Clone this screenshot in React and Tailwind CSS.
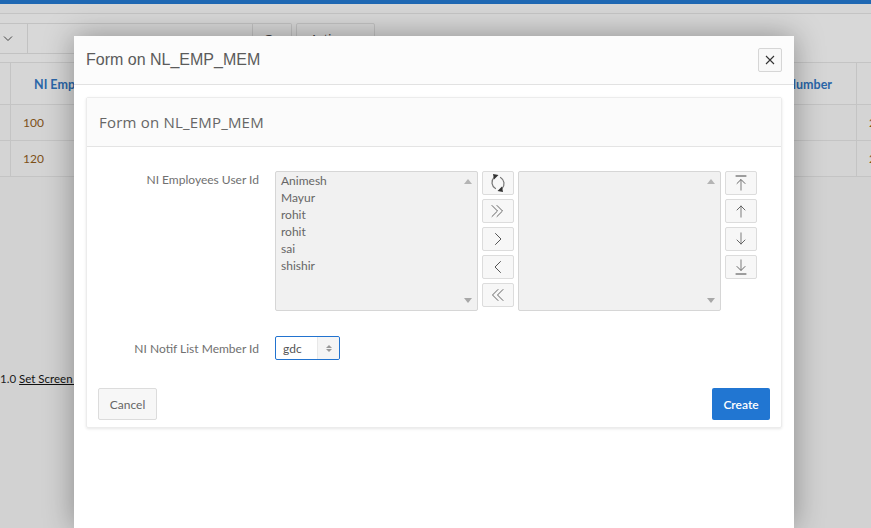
const sans = "font-['Lato',sans-serif]";

function Ico({ children }) {
  return (
    <svg width="22" height="20" viewBox="0 0 22 20" fill="none" stroke="#555" strokeWidth="1" strokeLinecap="round" strokeLinejoin="round">
      {children}
    </svg>
  );
}

function IconBtn({ children }) {
  return (
    <button className="w-[32px] h-[24px] flex items-center justify-center bg-[#f7f7f7] border border-[#dcdcdc] rounded-[2px]">
      {children}
    </button>
  );
}

const icons = {
  refresh: (
    <Ico>
      <path d="M7 4.5 A7 7 0 0 0 8.5 15.5" stroke="#777" strokeWidth="1.2" />
      <path d="M15 15.5 A7 7 0 0 0 13.5 4.5" stroke="#777" strokeWidth="1.2" />
      <path d="M6 1 L11.5 2 L7 6.5 Z" fill="#333" stroke="none" />
      <path d="M16 19 L10.5 18 L15 13.5 Z" fill="#333" stroke="none" />
    </Ico>
  ),
  dblR: (
    <Ico>
      <path d="M5 4.5 L10.5 10 L5 15.5" stroke="#666" />
      <path d="M10 4.5 L15.5 10 L10 15.5" stroke="#666" />
    </Ico>
  ),
  r: (
    <Ico>
      <path d="M8.5 4.5 L14 10 L8.5 15.5" stroke="#555" />
    </Ico>
  ),
  l: (
    <Ico>
      <path d="M13.5 4.5 L8 10 L13.5 15.5" stroke="#555" />
    </Ico>
  ),
  dblL: (
    <Ico>
      <path d="M11 4.5 L5.5 10 L11 15.5" stroke="#666" />
      <path d="M16 4.5 L10.5 10 L16 15.5" stroke="#666" />
    </Ico>
  ),
  top: (
    <Ico>
      <path d="M6 3 H16" stroke="#444" />
      <path d="M11 7 V17" stroke="#999" strokeWidth="1.3" />
      <path d="M7 10.5 L11 6.5 L15 10.5" stroke="#666" />
    </Ico>
  ),
  up: (
    <Ico>
      <path d="M11 5 V16" stroke="#999" strokeWidth="1.3" />
      <path d="M7 9 L11 5 L15 9" stroke="#666" />
    </Ico>
  ),
  down: (
    <Ico>
      <path d="M11 4 V15" stroke="#999" strokeWidth="1.3" />
      <path d="M7 11 L11 15 L15 11" stroke="#666" />
    </Ico>
  ),
  bottom: (
    <Ico>
      <path d="M6 17 H16" stroke="#444" />
      <path d="M11 3 V13" stroke="#999" strokeWidth="1.3" />
      <path d="M7 9.5 L11 13.5 L15 9.5" stroke="#666" />
    </Ico>
  ),
};

function ListBox({ items = [] }) {
  return (
    <div className="relative shrink-0 w-[203px] h-[140px] bg-[#f1f1f1] border border-[#d6d6d6] rounded-[2px] pl-[5px] text-[12px] leading-[17px] text-[#666]">
      {items.map((t, i) => (
        <div key={i}>{t}</div>
      ))}
      <span className="absolute right-[5px] top-[7px] w-0 h-0 border-x-[4px] border-x-transparent border-b-[5px] border-b-[#b4b4b4]" />
      <span className="absolute right-[5px] bottom-[7px] w-0 h-0 border-x-[4px] border-x-transparent border-t-[5px] border-t-[#a8a8a8]" />
    </div>
  );
}

function Background() {
  return (
    <div className={`h-full bg-[#d2d2d2] text-[12px] ${sans}`}>
      <div className="h-[4px] bg-[#1f68b3]" />
      <div className="h-[10px] bg-[#d6d6d6] border-b border-[#c4c4c4]" />
      <div className="h-[48px] bg-[#d8d8d8] flex pt-[9px]">
        <div className="w-[28px] h-[31px] border-y border-r border-[#c2c2c2] flex items-center pl-[3px]">
          <svg width="10" height="6" viewBox="0 0 10 6" fill="none" stroke="#444"><path d="M1 .5 L5 4.5 L9 .5" /></svg>
        </div>
        <div className="w-[225px] h-[31px] border-y border-r border-[#c2c2c2]" />
        <div className="w-[39px] h-[31px] border-y border-r border-[#c2c2c2] rounded-r-[2px] text-[#444] pl-[11px] pt-[6px]">Go</div>
        <div className="ml-[4px] w-[79px] h-[31px] border border-[#c2c2c2] rounded-[2px] text-[#444] pl-[13px] pt-[6px]">Actions</div>
      </div>
      <div className="border-b border-[#c4c4c4]">
        <div className="h-[43px] flex border-y border-[#c4c4c4] bg-[#d6d6d6] font-bold text-[12.5px] text-[#2a66a8]">
          <div className="w-[11px] border-r border-[#c4c4c4]" />
          <div className="flex-1 pl-[23px] leading-[43px]">NI Employees User Id</div>
          <div className="w-[60px] text-right leading-[43px] mr-[24px]">Number</div>
          <div className="w-[15px] border-l border-[#c4c4c4]" />
        </div>
        <div className="h-[36px] flex text-[#7d5018] bg-[#d4d4d4] border-b border-[#c4c4c4]">
          <div className="w-[11px] border-r border-[#c4c4c4]" />
          <div className="flex-1 pl-[12px] leading-[35px]">100</div>
          <div className="w-[15px] border-l border-[#c4c4c4] pl-[12px] leading-[35px]">2</div>
        </div>
        <div className="h-[35px] flex text-[#7d5018] bg-[#d4d4d4]">
          <div className="w-[11px] border-r border-[#c4c4c4]" />
          <div className="flex-1 pl-[12px] leading-[35px]">120</div>
          <div className="w-[15px] border-l border-[#c4c4c4] pl-[12px] leading-[35px]">2</div>
        </div>
      </div>
      <div className="mt-[194px] text-[11.5px] text-[#222] leading-[16px] whitespace-nowrap flex gap-[3px]">
        <span>1.0</span>
        <span className="underline text-[#111]">Set Screen Reader Mode On</span>
      </div>
    </div>
  );
}

export default function App() {
  return (
    <div className={`relative w-[871px] h-[528px] overflow-hidden ${sans}`}>
      <Background />
      <div className="absolute left-[74px] top-[36px] bottom-0 w-[720px] bg-white rounded-t-[2px] shadow-[0_0_30px_rgba(0,0,0,0.35)]">
        <div className="h-[49px] bg-[#fcfcfc] border-b border-[#e2e2e2] flex items-center justify-between pl-[12px] pr-[12px]">
          <span className="font-['Liberation_Sans',sans-serif] text-[16px] text-[#5b5b5b]">Form on NL_EMP_MEM</span>
          <button className="w-[24px] h-[24px] flex items-center justify-center bg-[#f8f8f8] border border-[#d6d6d6] rounded-[2px]">
            <svg width="10" height="10" viewBox="0 0 10 10" stroke="#333" strokeWidth="1.1"><path d="M1 1 L9 9 M9 1 L1 9" /></svg>
          </button>
        </div>
        <div className="mx-[12px] mt-[12px] h-[331px] border border-[#ececec] rounded-[2px] shadow-[0_1px_3px_rgba(0,0,0,0.1)]">
          <div className="h-[49px] bg-[#fbfbfb] border-b border-[#e4e4e4] flex items-center pl-[12px] text-[15px] tracking-[0.2px] font-['Open_Sans',sans-serif] text-[#666]">
            Form on NL_EMP_MEM
          </div>
          <div className="pt-[24px] text-[12px] text-[#707070]">
            <div className="flex">
              <div className="w-[172px] shrink-0 text-right leading-[18px]">NI Employees User Id</div>
              <div className="ml-[16px] flex gap-[4px]">
                <ListBox items={["Animesh", "Mayur", "rohit", "rohit", "sai", "shishir"]} />
                <div className="flex flex-col gap-[4px]">
                  <IconBtn>{icons.refresh}</IconBtn>
                  <IconBtn>{icons.dblR}</IconBtn>
                  <IconBtn>{icons.r}</IconBtn>
                  <IconBtn>{icons.l}</IconBtn>
                  <IconBtn>{icons.dblL}</IconBtn>
                </div>
                <ListBox />
                <div className="flex flex-col gap-[4px]">
                  <IconBtn>{icons.top}</IconBtn>
                  <IconBtn>{icons.up}</IconBtn>
                  <IconBtn>{icons.down}</IconBtn>
                  <IconBtn>{icons.bottom}</IconBtn>
                </div>
              </div>
            </div>
            <div className="flex mt-[25px]">
              <div className="w-[172px] shrink-0 text-right leading-[26px]">NI Notif List Member Id</div>
              <div className="ml-[16px] w-[65px] h-[24px] border border-[#2273cf] rounded-[2px] flex items-stretch">
                <div className="flex-1 pl-[7px] leading-[23px] text-[#555]">gdc</div>
                <div className="w-[22px] bg-[#f5f5f5] border-l border-[#e8e8e8] flex flex-col items-center justify-center gap-[1px] rounded-r-[2px]">
                  <span className="w-0 h-0 border-x-[3px] border-x-transparent border-b-[3px] border-b-[#999]" />
                  <span className="w-0 h-0 border-x-[3px] border-x-transparent border-t-[3px] border-t-[#999]" />
                </div>
              </div>
            </div>
          </div>
          <div className="flex justify-between mt-[26px] px-[11px]">
            <button className="w-[59px] h-[32px] pt-[2px] bg-[#f7f7f7] border border-[#dcdcdc] rounded-[2px] text-[12px] text-[#666]">Cancel</button>
            <button className="w-[58px] h-[32px] pt-[2px] bg-[#2176d2] rounded-[2px] text-[12px] font-semibold text-white">Create</button>
          </div>
        </div>
      </div>
    </div>
  );
}
